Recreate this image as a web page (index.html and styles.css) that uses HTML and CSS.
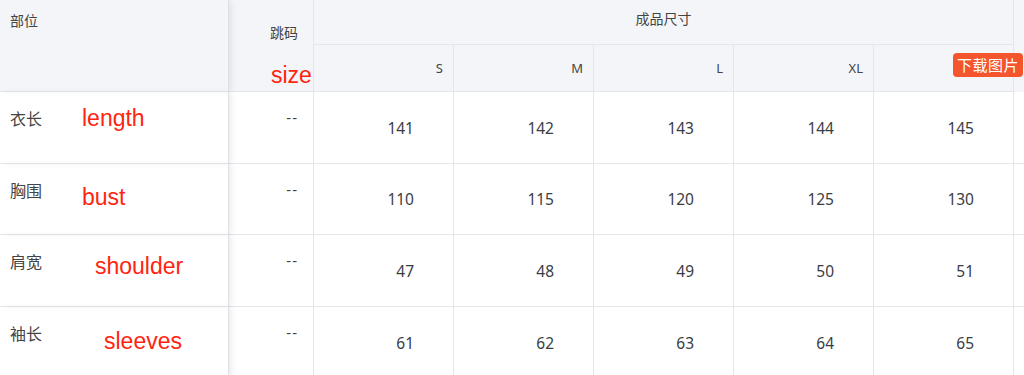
FILE: index.html
```html
<!DOCTYPE html>
<html lang="zh">
<head>
<meta charset="utf-8">
<title>尺码表</title>
<link rel="stylesheet" href="styles.css">
</head>
<body>
<div class="sheet">
  <div class="cell h-part">部位</div>
  <div class="cell h-jump">跳码<span class="ann ann-size">size</span></div>
  <div class="cell h-group">成品尺寸</div>
  <div class="cell h-filler"></div>
  <div class="cell h-size c3">S</div>
  <div class="cell h-size c4">M</div>
  <div class="cell h-size c5">L</div>
  <div class="cell h-size c6">XL</div>
  <div class="cell h-size c7"></div>

  <div class="cell label">衣长<span class="ann ann-length">length</span></div>
  <div class="cell dash">--</div>
  <div class="cell num">141</div>
  <div class="cell num">142</div>
  <div class="cell num">143</div>
  <div class="cell num">144</div>
  <div class="cell num">145</div>
  <div class="cell filler"></div>

  <div class="cell label">胸围<span class="ann ann-bust">bust</span></div>
  <div class="cell dash">--</div>
  <div class="cell num">110</div>
  <div class="cell num">115</div>
  <div class="cell num">120</div>
  <div class="cell num">125</div>
  <div class="cell num">130</div>
  <div class="cell filler"></div>

  <div class="cell label">肩宽<span class="ann ann-shoulder">shoulder</span></div>
  <div class="cell dash">--</div>
  <div class="cell num">47</div>
  <div class="cell num">48</div>
  <div class="cell num">49</div>
  <div class="cell num">50</div>
  <div class="cell num">51</div>
  <div class="cell filler"></div>

  <div class="cell label">袖长<span class="ann ann-sleeves">sleeves</span></div>
  <div class="cell dash">--</div>
  <div class="cell num">61</div>
  <div class="cell num">62</div>
  <div class="cell num">63</div>
  <div class="cell num">64</div>
  <div class="cell num">65</div>
  <div class="cell filler"></div>
</div>
<div class="download">下载图片</div>
</body>
</html>
```
FILE: styles.css
```css
html, body {
  margin: 0;
  padding: 0;
  background: #ffffff;
  overflow: hidden;
}
body {
  width: 1024px;
  height: 375px;
  position: relative;
  font-family: "Noto Sans", "Noto Sans CJK SC", sans-serif;
  color: #333;
}
.sheet {
  display: grid;
  grid-template-columns: 229px 85px repeat(5, 140px) 1fr;
  grid-template-rows: 45px 47px 72px 71px 72px 72px;
}
.cell {
  box-sizing: border-box;
  border-bottom: 1px solid #e3e6eb;
  border-right: 1px solid #e3e6eb;
  display: flex;
}
.h-part, .h-jump, .h-group, .h-size, .h-filler {
  background: #f3f5f9;
  color: #444;
  font-size: 14px;
  line-height: 20px;
}
.h-part {
  grid-row: 1 / 3;
  grid-column: 1;
  padding: 11px 10px 0;
  position: relative;
  z-index: 1;
  border-right-color: #dcdfe5;
  box-shadow: 4px 0 6px -1px rgba(0, 0, 0, 0.07);
}
.h-jump {
  grid-row: 1 / 3;
  grid-column: 2;
  justify-content: flex-end;
  padding: 23px 15px 0 0;
  position: relative;
}
.h-group {
  grid-row: 1;
  grid-column: 3 / 8;
  justify-content: center;
  padding-top: 9px;
}
.h-filler {
  grid-row: 1 / 3;
  grid-column: 8;
  border: none;
}
.h-size {
  grid-row: 2;
  justify-content: flex-end;
  align-items: center;
  padding-right: 10px;
  font-size: 13px;
}
.c3 { grid-column: 3; }
.c4 { grid-column: 4; }
.c5 { grid-column: 5; }
.c6 { grid-column: 6; }
.c7 { grid-column: 7; }

.label {
  position: relative;
  z-index: 1;
  padding: 16px 10px 0;
  font-size: 16px;
  line-height: 22px;
  color: #444;
  border-right-color: #dcdfe5;
  box-shadow: 4px 0 6px -1px rgba(0, 0, 0, 0.07);
}
.dash {
  justify-content: flex-end;
  padding: 14px 15px 0 0;
  font-size: 15px;
  line-height: 22px;
  letter-spacing: 1px;
  color: #444;
}
.num {
  justify-content: flex-end;
  align-items: center;
  padding-right: 39px;
  font-size: 15.5px;
  color: #3a3d44;
}
.filler {
  border-right: none;
}

.ann {
  position: absolute;
  font-family: "Liberation Sans", Arial, sans-serif;
  font-size: 23px;
  line-height: 1;
  color: #ff2410;
  white-space: nowrap;
}
.ann-size { left: 42px; top: 64px; }
.ann-length { left: 82px; top: 15px; }
.ann-bust { left: 82px; top: 22px; }
.ann-shoulder { left: 95px; top: 20px; }
.ann-sleeves { left: 104px; top: 23px; }

.download {
  position: absolute;
  left: 953px;
  top: 53px;
  width: 70px;
  height: 24px;
  box-sizing: border-box;
  background: #f5552c;
  color: #ffffff;
  border-radius: 4px;
  font-size: 15px;
  line-height: 24px;
  text-align: center;
  letter-spacing: 0.5px;
}
```
